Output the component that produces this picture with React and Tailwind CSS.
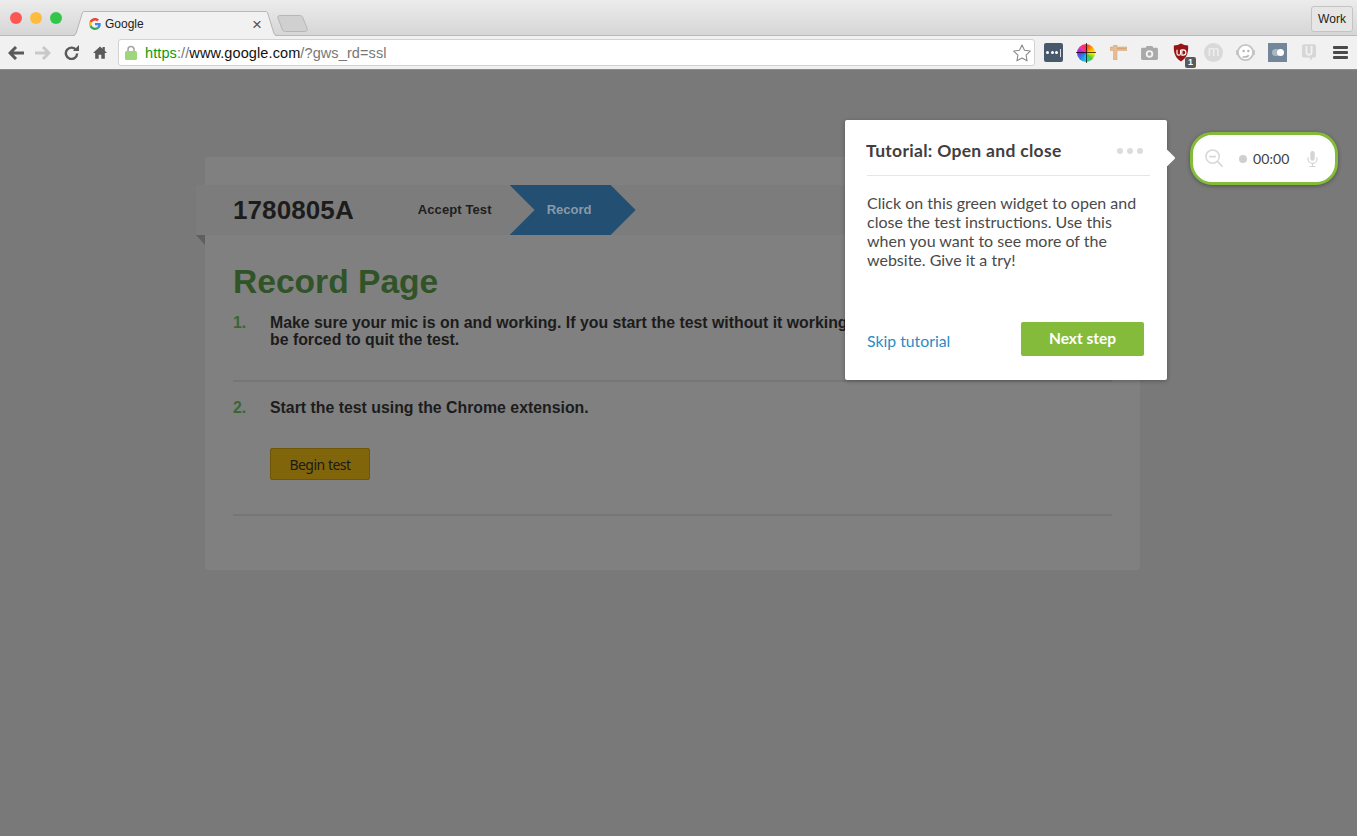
import React from "react";

function GoogleG({ className }) {
  return (
    <svg viewBox="0 0 48 48" className={className}>
      <path fill="#EA4335" d="M24 9.500c3.500 0 6.700 1.200 9.200 3.600l6.900-6.900C35.900 2.400 30.500 0 24 0 14.600 0 6.500 5.400 2.600 13.200l8 6.200C12.500 13.600 17.800 9.500 24 9.500z" />
      <path fill="#4285F4" d="M47 24.500c0-1.600-.1-3.100-.4-4.500H24v9h12.900c-.6 3-2.300 5.500-4.800 7.200l7.700 6C44.400 38 47 31.800 47 24.500z" />
      <path fill="#FBBC05" d="M10.600 28.600c-.5-1.400-.8-3-.8-4.600s.3-3.200.8-4.600l-8-6.200C.9 16.500 0 20.100 0 24s.9 7.500 2.600 10.800l8-6.200z" />
      <path fill="#34A853" d="M24 48c6.500 0 11.900-2.100 15.800-5.800l-7.700-6c-2.100 1.400-4.900 2.300-8.100 2.300-6.200 0-11.500-4.200-13.400-9.800l-8 6.200C6.500 42.600 14.600 48 24 48z" />
    </svg>
  );
}

function ToolbarIcons() {
  return (
    <div className="flex items-center">
      {/* lastpass */}
      <div className="w-[19px] h-[19px] ml-[9px] rounded-[2px] bg-[#47596a] flex items-center justify-center gap-[1.500px]">
        <span className="w-[3px] h-[3px] rounded-full bg-white" />
        <span className="w-[3px] h-[3px] rounded-full bg-white" />
        <span className="w-[3px] h-[3px] rounded-full bg-white" />
        <span className="w-[1px] h-[8px] bg-white/80" />
      </div>
      {/* colour wheel */}
      <div className="w-[18px] h-[18px] ml-[14px] rounded-full bg-[conic-gradient(#f33,#f90,#fe0,#5c3,#2cc,#28e,#73d,#e3a,#f33)] relative">
        <span className="absolute left-[8.500px] -top-[1px] w-[1px] h-[20px] bg-black/70" />
        <span className="absolute top-[8.500px] -left-[1px] h-[1px] w-[20px] bg-black/70" />
      </div>
      {/* signpost */}
      <svg viewBox="0 0 17 15" className="w-[17px] h-[15px] ml-[15px]">
        <path d="M3.500 0h3.500v2H17v3.500H7V15H3.500V5.500H0V2h3.500z" fill="#e6bc92" stroke="#cfa277" strokeWidth=".5" />
        <path d="M7 3.600h9" stroke="#c99a6c" strokeWidth=".7" />
      </svg>
      {/* camera */}
      <svg viewBox="0 0 18 16" className="w-[17px] h-[15px] ml-[14px]">
        <path fillRule="evenodd" d="M1.500 3H5l1-2h6l1 2h3.500A1.500 1.500 0 0 1 18 4.500v10a1.500 1.500 0 0 1-1.500 1.500h-15A1.500 1.500 0 0 1 0 14.500v-10A1.500 1.500 0 0 1 1.500 3zM9 5.500a4 4 0 1 0 0 8 4 4 0 0 0 0-8zm0 2a2 2 0 1 1 0 4 2 2 0 0 1 0-4z" fill="#a9a9a9" />
      </svg>
      {/* ublock */}
      <div className="relative w-[16px] h-[19px] ml-[15px] -mt-[1px]">
        <svg viewBox="0 0 18 20" className="w-[16px] h-[19px]">
          <path d="M9 0c2.500 1.500 5 2 8 2 .6 8-1.500 14-8 18C2.500 16 .4 10 1 2c3 0 5.500-.5 8-2z" fill="#981414" />
          <path d="M4.500 7v4a2 2 0 0 0 4 0V7M10 7v6h1.500a3 3 0 0 0 0-6z" fill="none" stroke="#fff" strokeWidth="1.300" />
        </svg>
        <span className="absolute -right-[7px] -bottom-[6px] w-[11px] h-[11px] rounded-[2px] bg-[#5a5a5a] text-white text-[9px] leading-[11px] font-bold text-center font-['Liberation_Sans',sans-serif]">1</span>
      </div>
      {/* m circle */}
      <div className="w-[19px] h-[19px] ml-[15px] rounded-full bg-[#d9d9d9] text-[#f2f2f2] text-[14px] leading-[17px] text-center font-['Liberation_Sans',sans-serif]">m</div>
      {/* chat face with headset */}
      <svg viewBox="0 0 20 20" className="w-[19px] h-[19px] ml-[13px]">
        <rect x="0" y="7" width="3" height="6" rx="1.500" fill="#c4c4c4" />
        <rect x="17" y="7" width="3" height="6" rx="1.500" fill="#c4c4c4" />
        <circle cx="10" cy="10" r="8" fill="#fff" stroke="#c4c4c4" strokeWidth="2" />
        <circle cx="8" cy="8.500" r="1.300" fill="#b5b5b5" />
        <circle cx="13" cy="8.500" r="1.300" fill="#b5b5b5" />
        <path d="M7 14.500c2.500.6 5 0 6.500-1.500" stroke="#b5b5b5" strokeWidth="1.600" fill="none" />
      </svg>
      {/* toggle square */}
      <div className="w-[19px] h-[19px] ml-[13px] bg-[#74879a] flex items-center justify-center relative">
        <span className="absolute left-[4px] top-[6px] w-[8px] h-[7px] rounded-full bg-white/40" />
        <span className="w-[7px] h-[7px] rounded-full bg-white ml-[5px] relative" />
      </div>
      {/* U bubble */}
      <svg viewBox="0 0 16 20" className="w-[14px] h-[18px] ml-[15px]">
        <path fillRule="evenodd" d="M2 0h12a2 2 0 0 1 2 2v11a2 2 0 0 1-2 2h-2l-2 4-1-4H2a2 2 0 0 1-2-2V2a2 2 0 0 1 2-2zm2 2v7a4 4 0 0 0 8 0V2H9.800v7a1.800 1.800 0 0 1-3.600 0V2z" fill="#d6d6d6" />
      </svg>
      {/* menu */}
      <div className="w-[15px] ml-[17px] flex flex-col gap-[2px]">
        <span className="h-[3px] bg-[#4a4a4a] rounded-[1px]" />
        <span className="h-[3px] bg-[#4a4a4a] rounded-[1px]" />
        <span className="h-[3px] bg-[#4a4a4a] rounded-[1px]" />
      </div>
    </div>
  );
}

function BrowserChrome() {
  return (
    <div className="font-['Liberation_Sans',sans-serif]">
      {/* tab strip */}
      <div className="h-[36px] bg-gradient-to-b from-[#ececec] to-[#d6d6d6] border-b border-[#b9b9b9] flex items-end relative">
        <div className="flex gap-[8px] pl-[10px] pb-[11px] self-end">
          <span className="w-[12px] h-[12px] rounded-full bg-[#fc5753]" />
          <span className="w-[12px] h-[12px] rounded-full bg-[#fdbc40]" />
          <span className="w-[12px] h-[12px] rounded-full bg-[#33c748]" />
        </div>
        {/* active tab */}
        <svg viewBox="0 0 12 25" className="w-[12px] h-[25px] ml-[10px] -mb-[1px]">
          <path d="M0 25c3 0 3.500-1 4.500-4L10 3c.5-1.500 1-3 2-3v25z" fill="#f1f1f1" />
          <path d="M0 24.500c3 0 3.500-.5 4.500-3.500L10 3c.5-1.500 1-2.500 2-2.500" fill="none" stroke="#b5b5b5" />
        </svg>
        <div className="w-[182px] h-[25px] -mb-[1px] bg-[#f1f1f1] border-t border-[#b9b9b9] flex items-center text-[12px] text-[#222]">
          <GoogleG className="w-[12px] h-[12px] ml-[5px]" />
          <span className="ml-[4px]">Google</span>
          <span className="ml-auto mr-[4px] text-[17px] leading-none text-[#555]">×</span>
        </div>
        <svg viewBox="0 0 12 25" className="w-[12px] h-[25px] -mb-[1px]">
          <path d="M12 25c-3 0-3.500-1-4.500-4L2 3C1.500 1.500 1 0 0 0v25z" fill="#f1f1f1" />
          <path d="M12 24.500c-3 0-3.500-.5-4.500-3.500L2 3C1.500 1.500 1 .5 0 .5" fill="none" stroke="#b5b5b5" />
        </svg>
        {/* new tab */}
        <svg viewBox="0 0 34 18" className="w-[32px] h-[17px] ml-[-1px] mb-[3px]">
          <path d="M3 .5h21c2 0 3 1 3.500 2.500L32 14c.5 2-.5 3.500-2.500 3.500H9c-2 0-3-1-3.500-2.500L1 3C.5 1.500 1.500.5 3 .5z" fill="#d0d0d0" stroke="#b3b3b3" />
        </svg>
        <button className="absolute right-[4px] top-[6px] w-[42px] h-[26px] rounded-[3px] border border-[#c4c4c4] bg-[#e6e6e6] text-[12px] text-[#222]">Work</button>
      </div>
      {/* toolbar */}
      <div className="h-[34px] bg-[#f1f1f1] border-b border-[#8c8c8c] flex items-center pl-[8px] pr-[8px]">
        <svg viewBox="0 0 16 14" className="w-[16px] h-[14px]">
          <path d="M8 1 2 7l6 6M2.500 7H16" fill="none" stroke="#5a5a5a" strokeWidth="3" />
        </svg>
        <svg viewBox="0 0 16 14" className="w-[16px] h-[14px] ml-[11px]">
          <path d="M8 1l6 6-6 6M13.500 7H0" fill="none" stroke="#c9c9c9" strokeWidth="3" />
        </svg>
        <svg viewBox="0 0 16 16" className="w-[15px] h-[15px] ml-[13px]">
          <path d="M13 5.500A6 6 0 1 0 14 9" fill="none" stroke="#5a5a5a" strokeWidth="2.600" />
          <path d="M9.500 6.500H16V0z" fill="#5a5a5a" />
        </svg>
        <svg viewBox="0 0 16 14" className="w-[14px] h-[13px] ml-[14px]">
          <path d="M8 0 0 7.500h2.500V14h4V9.500h3V14h4V7.500H16l-2.500-2.400V.8H11v2z" fill="#5a5a5a" />
        </svg>
        {/* omnibox */}
        <div className="w-[917px] h-[27px] ml-[11px] bg-white rounded-[3px] border border-[#d2d2d2] flex items-center text-[14.500px] tracking-[0.1px]">
          <svg viewBox="0 0 12 15" className="w-[12px] h-[15px] ml-[6px]">
            <path d="M3 7V4.500a3 3 0 0 1 6 0V7" fill="none" stroke="#a3a3a3" strokeWidth="1.500" />
            <rect y="6" width="12" height="9" rx="1.500" fill="#9fd57b" />
          </svg>
          <span className="ml-[8px] pt-[2px] text-[#0b9c10]">https</span>
          <span className="pt-[2px] text-[#777]">://</span>
          <span className="pt-[2px] text-[#111]">www.google.com</span>
          <span className="pt-[2px] text-[#777]">/?gws_rd=ssl</span>
          <svg viewBox="0 0 24 24" className="w-[20px] h-[20px] ml-auto mr-[2px]">
            <path d="m12 2.500 3 6.300 6.900.9-5 4.800 1.200 6.900-6.100-3.300-6.100 3.300 1.200-6.900-5-4.800L9 8.800z" fill="#fff" stroke="#8a8a8a" strokeWidth="1.300" strokeLinejoin="round" />
          </svg>
        </div>
        <ToolbarIcons />
      </div>
    </div>
  );
}

function TestPage() {
  return (
    <div className="flex-1 bg-[#797979] pt-[87px] pl-[205px] font-['Liberation_Sans',sans-serif]">
      <div className="w-[935px] h-[413px] bg-[#808080] rounded-[3px] pt-[28px]">
        {/* heading band */}
        <div className="relative -ml-[9px] h-[50px] bg-[#7c7c7c] flex items-center">
          <span className="ml-[37px] text-[26px] font-bold text-[#1c1c1c] tracking-[0.1px]">1780805A</span>
          <span className="ml-[64px] text-[13px] font-bold text-[#1e1e1e] tracking-[0.1px]">Accept Test</span>
          <div className="ml-[18px] h-[50px] w-[126px] bg-[#234f73] [clip-path:polygon(0_0,101px_0,126px_25px,101px_50px,0_50px,25px_25px)] flex items-center pl-[37px] text-[13px] font-bold text-[#8a9aa8]">Record</div>
          <span className="absolute left-0 top-[50px] w-0 h-0 border-t-[10px] border-l-[9px] border-t-[#5f5f5f] border-l-transparent" />
        </div>
        <div className="px-[28px]">
          <h1 className="mt-[28px] text-[33.600px] leading-[37px] font-bold text-[#305428]">Record Page</h1>
          <div className="mt-[14px] flex text-[15.850px] leading-[17px] font-bold text-[#1c1c1c] pb-[32px] border-b-2 border-[#767676]">
            <span className="w-[37px] text-[#3b6634]">1.</span>
            <p className="w-[652px]">Make sure your mic is on and working. If you start the test without it working, you will be forced to quit the test.</p>
          </div>
          <div className="mt-[17px] flex text-[15.850px] leading-[17px] font-bold text-[#1c1c1c]">
            <span className="w-[37px] text-[#3b6634]">2.</span>
            <p>Start the test using the Chrome extension.</p>
          </div>
          <div className="pl-[37px] mt-[32px] pb-[34px] border-b-2 border-[#767676]">
            <button className="w-[100px] h-[32px] rounded-[2px] bg-[#80650a] border border-[#6d5606] text-[14px] tracking-[-0.5px] text-[#1a1a1a] font-['Noto_Sans',sans-serif]">Begin test</button>
          </div>
        </div>
      </div>
    </div>
  );
}

function TutorialPopup() {
  return (
    <div className="absolute left-[845px] top-[120px] w-[322px] h-[260px] bg-white rounded-[2px] shadow-[0_1px_4px_rgba(0,0,0,0.3)] pl-[22px] pr-[17px] font-['Lato',sans-serif] flex flex-col">
      <span className="absolute -right-[6px] top-[32px] w-[12px] h-[12px] rotate-45 bg-white rounded-[1px]" />
      <div className="h-[56px] pt-[7px] flex items-center justify-between border-b border-[#e6e6e6]">
        <span className="text-[17.500px] font-bold text-[#3f3f3f] tracking-[0.3px] -ml-[1px]">Tutorial: Open and close</span>
        <div className="flex gap-[4px] mr-[7px]">
          <span className="w-[6px] h-[6px] rounded-full bg-[#dcdcdc]" />
          <span className="w-[6px] h-[6px] rounded-full bg-[#dcdcdc]" />
          <span className="w-[6px] h-[6px] rounded-full bg-[#dcdcdc]" />
        </div>
      </div>
      <p className="mt-[17px] text-[16px] leading-[19px] text-[#4a4a4a]">Click on this green widget to open and close the test instructions. Use this when you want to see more of the website. Give it a try!</p>
      <div className="mt-auto mb-[24px] flex items-end justify-between">
        <a className="text-[15.800px] text-[#2b8cc4] mb-[3px]">Skip tutorial</a>
        <button className="w-[123px] h-[34px] mr-[6px] pb-[1px] rounded-[2px] bg-[#84bb3b] text-white text-[15.500px] font-bold">Next step</button>
      </div>
    </div>
  );
}

function RecorderWidget() {
  return (
    <div className="absolute left-[1190px] top-[132px] w-[148px] h-[53px] bg-white rounded-[22px] border-[3px] border-[#84bb3b] shadow-[0_1px_4px_rgba(0,0,0,0.35)] flex items-center pl-[12px] font-['Lato',sans-serif]">
      <svg viewBox="0 0 20 20" className="w-[19px] h-[19px]">
        <circle cx="8" cy="8" r="7" fill="none" stroke="#d8d8d8" strokeWidth="1.600" />
        <path d="M4.500 8h7M13 13l5.500 5.500" stroke="#d8d8d8" strokeWidth="1.800" fill="none" />
      </svg>
      <span className="ml-[15px] w-[8px] h-[8px] rounded-full bg-[#cfcfcf]" />
      <span className="ml-[6px] text-[14px] text-[#404040] tracking-[0.1px]">00:00</span>
      <svg viewBox="0 0 12 18" className="w-[11px] h-[16px] ml-[18px]">
        <rect x="3.500" y="0" width="5" height="11" rx="2.500" fill="#d4d4d4" />
        <path d="M1 7v2a5 5 0 0 0 10 0V7M6 14v3M2.500 17.500h7" fill="none" stroke="#d4d4d4" strokeWidth="1.300" />
      </svg>
    </div>
  );
}

export default function App() {
  return (
    <div className="relative h-[836px] overflow-hidden flex flex-col">
      <BrowserChrome />
      <TestPage />
      <TutorialPopup />
      <RecorderWidget />
    </div>
  );
}
